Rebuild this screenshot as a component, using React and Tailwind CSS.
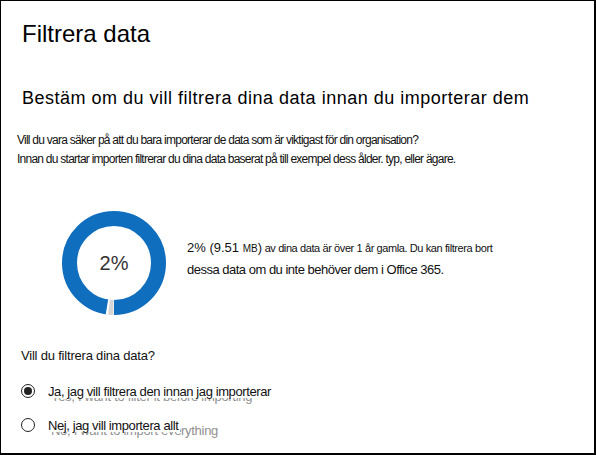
import React from 'react';

const font = { fontFamily: '"Liberation Sans", Arial, sans-serif' };

const Donut = () => {
    // 2% slice at the bottom, the rest blue
    const r = 44.5;
    const c = 2 * Math.PI * r;
    const slice = c * 0.02;
    return (
        <svg width="106" height="106" viewBox="0 0 106 106" className="shrink-0">
            <circle cx="53" cy="53" r={r} fill="none" stroke="#106ebe" strokeWidth="15" />
            {/* grey slice with white gaps */}
            <circle
                cx="53" cy="53" r={r} fill="none" stroke="#ffffff" strokeWidth="16"
                strokeDasharray={`${slice + 3} ${c}`}
                transform="rotate(90 53 53)"
                strokeDashoffset="1.5"
            />
            <circle
                cx="53" cy="53" r={r} fill="none" stroke="#d6d6d6" strokeWidth="15"
                strokeDasharray={`${slice - 1} ${c}`}
                transform="rotate(90 53 53)"
                strokeDashoffset="-0.5"
            />
            <text x="53" y="60" textAnchor="middle" fontSize="20" fill="#333333" fontFamily="Liberation Sans, Arial, sans-serif">2%</text>
        </svg>
    );
};

const Radio = ({ checked, label, ghost }) => (
    <div className="flex items-center h-[34px]">
        <div className="w-[14px] h-[14px] rounded-full border border-[#222] flex items-center justify-center ml-[20px] shrink-0">
            {checked && <div className="w-[8px] h-[8px] rounded-full bg-[#222]" />}
        </div>
        <div className="relative ml-[13px] text-[13px] text-[#111]">
            {/* leftover text from the original screen, mostly hidden */}
            <span className="absolute left-[3px] top-[5px] whitespace-nowrap text-[#909090] leading-[15px] tracking-[-0.3px]">{ghost}</span>
            <span className="relative block bg-white leading-[15px] h-[14px] whitespace-nowrap pr-[2px] tracking-[-0.4px]">{label}</span>
        </div>
    </div>
);

export default function App() {
    return (
        <div className="w-[596px] h-[455px] bg-white overflow-hidden" style={font}>
            <div className="w-[596px] h-[455px] border border-black border-r-2 border-b-2 flex flex-col">
                <h1 className="text-[24px] leading-[32px] text-black ml-[21px] mt-[17px]">Filtrera data</h1>
                <h2 className="text-[18px] leading-[24px] text-black ml-[21px] mt-[36px] tracking-[0.5px] whitespace-nowrap">
                    Bestäm om du vill filtrera dina data innan du importerar dem
                </h2>

                <div className="ml-[16px] mt-[21px] text-[12px] leading-[19px] text-[#111] tracking-[-0.75px]">
                    <p>Vill du vara säker på att du bara importerar de data som är viktigast för din organisation?</p>
                    <p>Innan du startar importen filtrerar du dina data baserat på till exempel dess ålder. typ, eller ägare.</p>
                </div>

                <div className="flex items-center mt-[41px] ml-[60px]">
                    <Donut />
                    <div className="ml-[20px] -mt-[10px] text-[#111]">
                        <p className="text-[11px] leading-[21px] tracking-[-0.4px] whitespace-nowrap">
                            <span className="text-[13px] tracking-[0px]">2% (9.51 </span>
                            <span className="text-[10px] tracking-[0px]">MB</span>
                            <span className="text-[13px] tracking-[0px]">)</span> av dina data är över 1 år gamla. Du kan filtrera bort
                        </p>
                        <p className="text-[13px] leading-[21px] tracking-[-0.5px]">dessa data om du inte behöver dem i Office 365.</p>
                    </div>
                </div>

                <p className="ml-[20px] mt-[31px] text-[13px] leading-[18px] text-[#111] tracking-[-0.2px]">Vill du filtrera dina data?</p>

                <div className="mt-[9px]">
                    <Radio checked label="Ja, jag vill filtrera den innan jag importerar" ghost="Yes, I want to filter it before importing" />
                    <Radio label="Nej, jag vill importera allt" ghost="No, I want to import everything" />
                </div>
            </div>
        </div>
    );
}
